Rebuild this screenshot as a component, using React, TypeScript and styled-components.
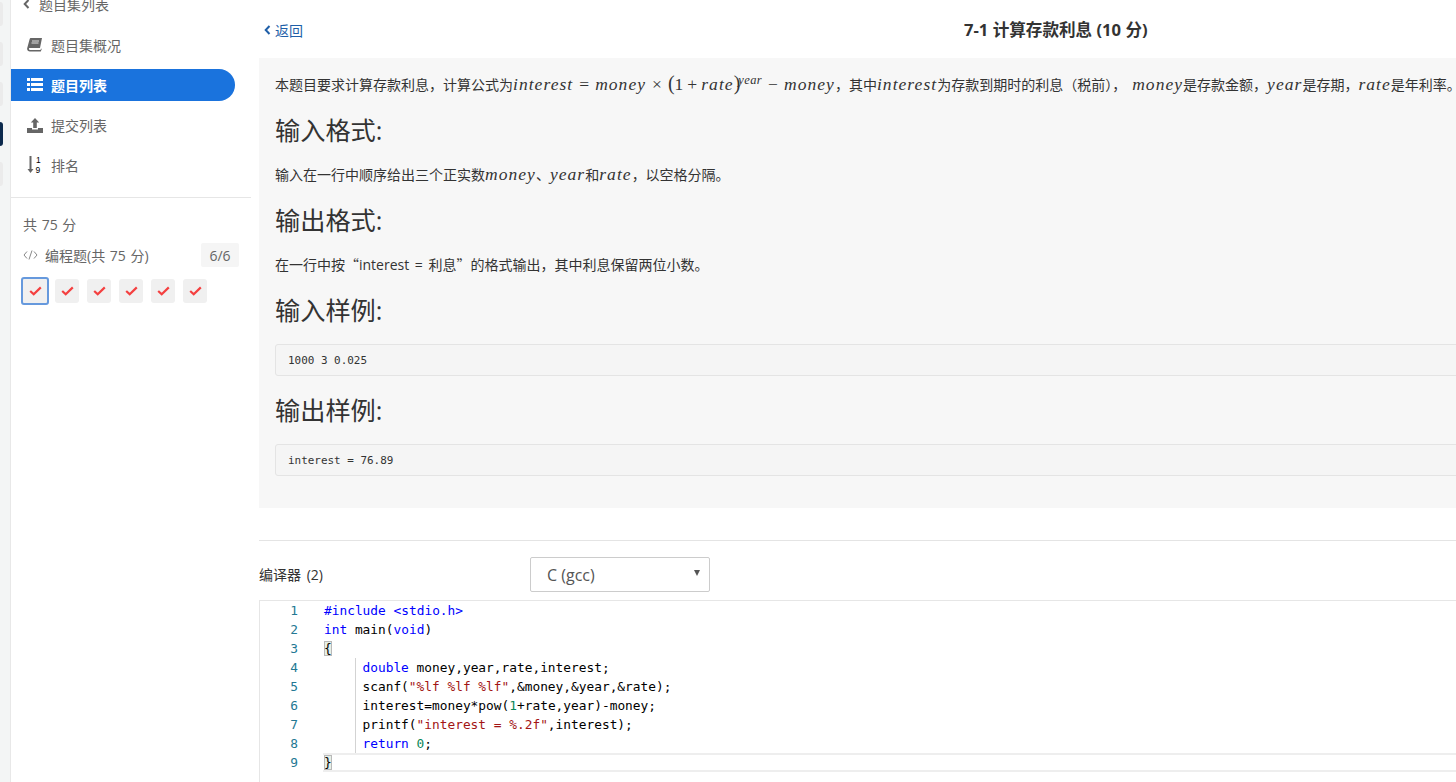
import React from "react";
import styled, { createGlobalStyle } from "styled-components";

const Global = createGlobalStyle`
  html, body { margin: 0; padding: 0; height: 782px; overflow: hidden; background: #fff; }
  * { box-sizing: border-box; }
  body { font-family: "Open Sans", "Noto Sans CJK SC", sans-serif; color: #333; }
`;
const CJK = `"Open Sans", "Noto Sans CJK SC", sans-serif`;

const Page = styled.div`display: flex; width: 1456px; height: 782px; overflow: hidden;`;
const Rail = styled.div`
  width: 11px; flex: none; background: #f3f5f5; border-right: 1px solid #e8e8e8;
  display: flex; flex-direction: column; align-items: flex-start; gap: 16px; padding-top: 2px;
`;
const RailChip = styled.div<{ $on?: boolean }>`
  width: 3px; height: 24px; border-radius: 0 3px 3px 0;
  background: ${p => (p.$on ? "#0c2a4d" : "#ebebeb")};
`;
const Sidebar = styled.aside`width: 240px; flex: none; margin-top: -7px; font-family: ${CJK};`;
const Back = styled.div`
  height: 22px; display: flex; align-items: center; gap: 9px; padding-left: 12px;
  font-size: 14px; color: #666;
`;
const NavList = styled.nav`display: flex; flex-direction: column; padding-top: 14px; padding-right: 16px;`;
const NavItem = styled.div<{ $active?: boolean }>`
  height: 32px; margin-bottom: 8px; display: flex; align-items: center; gap: 8px; padding-left: 16px;
  border-radius: 0 16px 16px 0; font-size: 14px;
  background: ${p => (p.$active ? "#1a73dd" : "transparent")};
  color: ${p => (p.$active ? "#fff" : "#666")};
  font-weight: ${p => (p.$active ? 700 : 400)};
`;
const IconSlot = styled.span`width: 16px; height: 16px; flex: none; display: flex; align-items: center; justify-content: center;`;
const Divider = styled.div`height: 1px; background: #e6e6e6; margin-top: 8px;`;
const Summary = styled.div`padding: 18px 12px 0 12px; font-size: 14px; color: #666; word-spacing: 1px;`;
const Total = styled.div`line-height: 18px;`;
const GroupRow = styled.div`display: flex; align-items: center; height: 24px; margin-top: 9px; gap: 7px;`;
const Count = styled.span`
  margin-left: auto; width: 38px; height: 24px; background: #f5f5f5; border-radius: 2px;
  display: flex; align-items: center; justify-content: center; font-size: 14px;
`;
const Checks = styled.div`display: flex; align-items: center; gap: 8px; margin-top: 10px; margin-left: -2px;`;
const Check = styled.div<{ $current?: boolean }>`
  width: ${p => (p.$current ? "28px" : "24px")}; height: ${p => (p.$current ? "28px" : "24px")};
  margin-right: ${p => (p.$current ? "-2px" : "0")};
  border-radius: 3px; background: #f0f0f0; display: flex; align-items: center; justify-content: center;
  border: ${p => (p.$current ? "2px solid #6699dd" : "0")};
`;
const Main = styled.main`flex: 1; min-width: 0; padding-left: 8px; width: 1197px;`;
const TopBar = styled.div`height: 58px; display: flex; align-items: center; padding-top: 1px;`;
const BackLink = styled.div`
  width: 50px; flex: none; display: flex; align-items: center; gap: 4px; padding-left: 5px;
  font-size: 14px; color: #1f5fa8; font-family: ${CJK};
`;
const Title = styled.h1`
  margin: -2px 0 0 655px; font: 700 16.6px ${CJK}; color: #333; white-space: nowrap;
`;
const Problem = styled.section`
  background: #f7f7f7; width: 1240px; height: 450px; padding: 13px 16px 0;
  font-family: ${CJK}; color: #333;
`;
const Para = styled.p<{ $top?: number; $ws?: number }>`
  margin: ${p => p.$top ?? 0}px 0 0; font-size: 14px; line-height: 24px; height: 24px; white-space: nowrap;
  word-spacing: ${p => p.$ws ?? 0}px;
`;
const M = styled.span<{ $lead?: number }>`
  font-family: "Liberation Serif", serif; font-style: italic; font-size: 17.5px; letter-spacing: 1.05px;
  margin-left: ${p => p.$lead ?? 0}px;
`;
const R = styled.span<{ $gap?: number }>`font-family: "Liberation Serif", serif; font-size: 17.5px; margin: 0 ${p => p.$gap ?? 6}px;`;
const Big = styled.span`font-family: "Liberation Serif", serif; font-size: 20px;`;
const Sup = styled.sup`font-family: "Liberation Serif", serif; font-style: italic; font-size: 12.5px; letter-spacing: .4px; line-height: 0; vertical-align: 6px; margin-left: -2px;`;
const Quote = styled.span`font-family: "Noto Sans CJK SC", sans-serif;`;
const H = styled.h2<{ $top: number }>`
  margin: ${p => p.$top}px 0 0; font: 400 25.2px/32px ${CJK}; color: #333; height: 32px;
`;
const Sample = styled.pre<{ $top: number }>`
  margin: ${p => p.$top}px 0 0; height: 32px; padding: 0 12px;
  border: 1px solid #e4e4e4; border-radius: 3px; background: #f5f5f5;
  font: 10.95px/31px "DejaVu Sans Mono", monospace; color: #333;
`;
const Rule = styled.div`height: 1px; background: #e4e4e4; margin-top: 32px; width: 1240px;`;
const EditorHead = styled.div`display: flex; align-items: center; height: 35px; margin-top: 16px;`;
const EditorLabel = styled.span`width: 271px; margin-top: -2px; font: 14px ${CJK}; color: #333; word-spacing: 2px;`;
const LangSelect = styled.div`
  width: 180px; height: 35px; border: 1px solid #ccc; border-radius: 2px; display: flex; align-items: center;
  justify-content: space-between; padding: 0 9px 0 16px; font: 16px "Open Sans", sans-serif; color: #555;
`;
const Caret = styled.span`width: 0; height: 0; border-left: 3.5px solid transparent; border-right: 3.5px solid transparent; border-top: 6px solid #555; margin-top: -3px;`;
const Editor = styled.div`
  margin-top: 8px; width: 1240px; height: 190px; border: 1px solid #e6e6e6; border-right: 0;
  font: 12.83px/19px "DejaVu Sans Mono", monospace; position: relative;
`;
const Line = styled.div`display: flex; height: 19px; white-space: pre;`;
const LineNo = styled.span`width: 38px; text-align: right; color: #237893; flex: none;`;
const Code = styled.span<{ $indent?: boolean }>`
  margin-left: 26px; color: #000; position: relative; padding-left: ${p => (p.$indent ? "38.5px" : "0")};
`;
const Guide = styled.i`position: absolute; left: 31px; top: 0; bottom: 0; width: 1px; background: #d3d3d3;`;
const Kw = styled.span`color: #0000ff;`;
const Str = styled.span`color: #a31515;`;
const Num = styled.span`color: #098658;`;
const Brace = styled.span`background: #e6efe6; outline: 1px solid #b9b9b9; outline-offset: -1px;`;
const ActiveLine = styled.div`position: absolute; left: 63px; right: 0; top: 152px; height: 19px; border-top: 2px solid #eee; border-bottom: 2px solid #eee;`;

const Book = () => (
  <svg width="16" height="14" viewBox="0 0 16 14"><path fill="currentColor" d="M4 0h11l-2 10H3c-.9 0-1.200.6-1 1.200.1.500.6.800 1 .800h10.500l.5-1.500.7.500-.9 2.500H3c-1.700 0-3-1-2.900-3L2.600 1.300C2.800.5 3.300 0 4 0z"/><path stroke="#fff" strokeWidth=".8" d="M5 3h7M4.500 5h7"/></svg>
);
const ListIc = () => (
  <svg width="16" height="14" viewBox="0 0 16 14"><path fill="currentColor" d="M0 0h3v3H0zM4 0h12v3H4zM0 5h3v3H0zM4 5h12v3H4zM0 10h3v3H0zM4 10h12v3H4z"/></svg>
);
const Upload = () => (
  <svg width="16" height="15" viewBox="0 0 16 15"><path fill="currentColor" d="M8 0l4.200 4.500H9.800V10H6.200V4.500H3.800zM0 10h5v1.500h6V10h5v5H0z"/></svg>
);
const Sort = () => (
  <svg width="16" height="18" viewBox="0 0 16 18"><path fill="currentColor" d="M2.500 0h2v13h2L3.500 17 .5 13h2z"/><text x="9" y="7" fontSize="8.500" fontFamily="Liberation Sans">1</text><text x="8.500" y="16.500" fontSize="8.500" fontFamily="Liberation Sans">9</text></svg>
);
const Tick = () => (
  <svg width="13" height="10" viewBox="0 0 13 10"><path d="M1.200 5l3.500 3.300L11.800 1.400" fill="none" stroke="#f44040" strokeWidth="2.200"/></svg>
);
const Chev = ({ c }: { c: string }) => (
  <svg width="7" height="10" viewBox="0 0 7 10"><path d="M5.500 1L1.700 5l3.800 4" fill="none" stroke={c} strokeWidth="2"/></svg>
);

const src: React.ReactNode[] = [
  <><Kw>#include</Kw> <Kw>&lt;stdio.h&gt;</Kw></>,
  <><Kw>int</Kw> main(<Kw>void</Kw>)</>,
  <Brace>{"{"}</Brace>,
  <><Kw>double</Kw> money,year,rate,interest;</>,
  <>scanf(<Str>"%lf %lf %lf"</Str>,&amp;money,&amp;year,&amp;rate);</>,
  <>interest=money*pow(<Num>1</Num>+rate,year)-money;</>,
  <>printf(<Str>"interest = %.2f"</Str>,interest);</>,
  <><Kw>return</Kw> <Num>0</Num>;</>,
  <Brace>{"}"}</Brace>,
];

export default function App() {
  return (
    <Page>
      <Global />
      <Rail>
        <RailChip /><RailChip /><RailChip /><RailChip $on /><RailChip />
      </Rail>
      <Sidebar>
        <Back><Chev c="#666" /><span>题目集列表</span></Back>
        <NavList>
          <NavItem><IconSlot><Book /></IconSlot>题目集概况</NavItem>
          <NavItem $active><IconSlot><ListIc /></IconSlot>题目列表</NavItem>
          <NavItem><IconSlot><Upload /></IconSlot>提交列表</NavItem>
          <NavItem><IconSlot><Sort /></IconSlot>排名</NavItem>
        </NavList>
        <Divider />
        <Summary>
          <Total>共 75 分</Total>
          <GroupRow>
            <svg width="15" height="10" viewBox="0 0 15 10"><path d="M4 1.500L1 5l3 3.500M11 1.500L14 5l-3 3.500M9 .5L6 9.500" fill="none" stroke="#888" strokeWidth="1"/></svg>
            <span>编程题(共 75 分)</span>
            <Count>6/6</Count>
          </GroupRow>
          <Checks>
            <Check $current><Tick /></Check>
            {[0, 1, 2, 3, 4].map(i => <Check key={i}><Tick /></Check>)}
          </Checks>
        </Summary>
      </Sidebar>
      <Main>
        <TopBar>
          <BackLink><Chev c="#1f5fa8" />返回</BackLink>
          <Title>7-1 计算存款利息 (10 分)</Title>
        </TopBar>
        <Problem>
          <Para>
            本题目要求计算存款利息，计算公式为<M>interest</M><R>=</R><M>money</M><R>×</R><Big>(</Big><R $gap={0}>1</R><R $gap={4}>+</R><M>rate</M><Big>)</Big><Sup>year</Sup><R>−</R><M>money</M>，其中<M>interest</M>为存款到期时的利息（税前），<M $lead={6}>money</M>是存款金额，<M>year</M>是存期，<M>rate</M>是年利率。
          </Para>
          <H $top={19}>输入格式:</H>
          <Para $top={16}>输入在一行中顺序给出三个正实数<M>money</M>、<M>year</M>和<M>rate</M>，以空格分隔。</Para>
          <H $top={18}>输出格式:</H>
          <Para $top={16} $ws={2}>在一行中按<Quote>“</Quote>interest = 利息<Quote>”</Quote>的格式输出，其中利息保留两位小数。</Para>
          <H $top={18}>输入样例:</H>
          <Sample $top={18}>1000 3 0.025</Sample>
          <H $top={18}>输出样例:</H>
          <Sample $top={18}>interest = 76.89</Sample>
        </Problem>
        <Rule />
        <EditorHead>
          <EditorLabel>编译器 (2)</EditorLabel>
          <LangSelect>C (gcc)<Caret /></LangSelect>
        </EditorHead>
        <Editor>
          <ActiveLine />
          {src.map((c, i) => (
            <Line key={i}>
              <LineNo>{i + 1}</LineNo>
              <Code $indent={i >= 3 && i <= 7}>{i >= 3 && i <= 7 && <Guide />}{c}</Code>
            </Line>
          ))}
        </Editor>
      </Main>
    </Page>
  );
}
